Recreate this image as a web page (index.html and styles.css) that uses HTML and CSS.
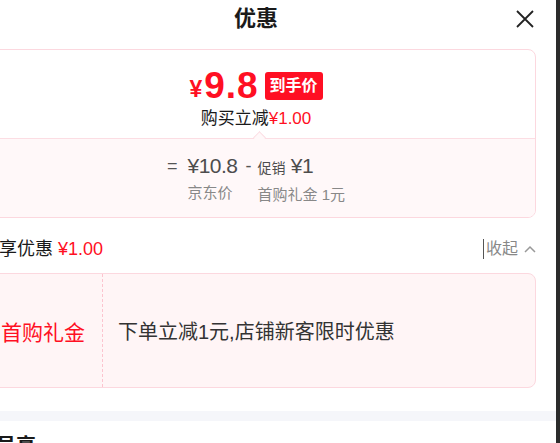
FILE: index.html
```html
<!DOCTYPE html>
<html lang="zh-CN">
<head>
    <meta charset="UTF-8">
    <title>优惠</title>
    <meta name="viewport" content="width=device-width, initial-scale=1.0">
    <link rel="stylesheet" href="styles.css">
</head>
<body>
    <div class="panel">
        <div class="header">
            <span></span>
            <h1>优惠</h1>
            <span class="close">
                <svg width="18" height="18" viewBox="0 0 18 18"><path d="M1 1L17 17M17 1L1 17" stroke="#222" stroke-width="1.8" fill="none"/></svg>
            </span>
        </div>
        <div class="content">
            <div class="price-card">
                <div class="price-top">
                    <div class="price-row">
                        <span class="yen">¥</span><span class="num">9.8</span>
                        <span class="badge">到手价</span>
                    </div>
                    <p class="minus">购买立减<em>¥1.00</em></p>
                </div>
                <div class="price-detail">
                    <span class="op eq">=</span>
                    <div class="col">
                        <span class="val">¥10.8</span>
                        <span class="lbl">京东价</span>
                    </div>
                    <span class="op dash">-</span>
                    <div class="col">
                        <span class="val"><small>促销</small> ¥1</span>
                        <span class="lbl">首购礼金 1元</span>
                    </div>
                </div>
            </div>

            <div class="sum-row">
                <span class="sum">已享优惠 <em>¥1.00</em></span>
                <span class="collapse">收起
                    <svg width="12" height="8" viewBox="0 0 12 8"><path d="M1 7L6 2L11 7" stroke="#999" stroke-width="1.5" fill="none"/></svg>
                </span>
            </div>

            <div class="gift-card">
                <div class="gift-name">首购礼金</div>
                <div class="gift-desc">下单立减1元,店铺新客限时优惠</div>
            </div>
        </div>
        <div class="band"></div>
        <div class="content">
            <h2>会员享</h2>
        </div>
    </div>
    <div class="scrollbar"></div>
</body>
</html>
```

FILE: styles.css
```css
body {
    display: flex;
    height: 443px;
    margin: 0;
    overflow: hidden;
    font-family: "Liberation Sans", "Noto Sans CJK SC", sans-serif;
    background: #fff;
    color: #1a1a1a;
}
em {
    font-style: normal;
    color: #ff0f23;
}
.panel {
    flex: none;
    width: 600px;
    margin-left: -44px;
    background: #fff;
}
.scrollbar {
    flex: none;
    width: 4px;
    background: #2b2b2b;
}
.header {
    display: grid;
    grid-template-columns: 1fr auto 1fr;
    align-items: center;
    height: 38px;
}
.header h1 {
    margin: 0;
    font-size: 22px;
    font-weight: bold;
    line-height: 38px;
    color: #1a1a1a;
}
.close {
    justify-self: end;
    display: flex;
    margin-right: 22px;
}
.content {
    padding: 0 20px;
}
.price-card {
    margin-top: 11px;
    border: 1px solid #fcd8df;
    border-radius: 8px;
    overflow: hidden;
}
.price-top {
    display: flex;
    flex-direction: column;
    align-items: center;
    padding: 18px 0 8px;
    gap: 4px;
}
.price-row {
    display: flex;
    align-items: center;
    height: 36px;
    color: #ff0f23;
    font-weight: bold;
}
.price-row .yen {
    font-size: 23px;
    line-height: 36px;
    margin-top: 6px;
}
.price-row .num {
    font-size: 37px;
    line-height: 36px;
    letter-spacing: 1px;
    margin-left: 2px;
}
.badge {
    margin-left: 6px;
    padding: 0 5px;
    height: 28px;
    line-height: 28px;
    border-radius: 3px;
    background: #ff0f23;
    color: #fff;
    font-size: 16px;
}
.minus {
    margin: 0;
    font-size: 17px;
    line-height: 22px;
}
.price-detail {
    position: relative;
    display: flex;
    justify-content: center;
    height: 64px;
    padding-top: 14px;
    border-top: 1px solid #fcdde3;
    background: #fff8f9;
}
.price-detail::before {
    content: '';
    position: absolute;
    top: -6px;
    left: calc(50% - 1px);
    width: 8px;
    height: 8px;
    border-top: 1px solid #fcdde3;
    border-left: 1px solid #fcdde3;
    background: #fff8f9;
    transform: rotate(45deg);
}
.price-detail .op {
    font-size: 18px;
    line-height: 26px;
    color: #555;
}
.price-detail .eq {
    margin-right: 10px;
}
.price-detail .dash {
    margin: 0 6px 0 8px;
}
.col {
    display: flex;
    flex-direction: column;
    gap: 4px;
}
.col .val {
    font-size: 21px;
    line-height: 26px;
    letter-spacing: -0.5px;
    color: #4d4d4d;
}
.col .val small {
    font-size: 14px;
    letter-spacing: 0;
}
.col .lbl {
    font-size: 15px;
    line-height: 20px;
    color: #888;
}
.sum-row {
    display: flex;
    justify-content: space-between;
    align-items: center;
    height: 24px;
    padding: 19px 0 12px;
}
.sum {
    padding-left: 5px;
    font-size: 18px;
    line-height: 24px;
}
.collapse {
    display: flex;
    align-items: center;
    gap: 6px;
    padding-left: 2px;
    border-left: 1px solid #555;
    font-size: 16px;
    line-height: 20px;
    color: #888;
}
.gift-card {
    display: flex;
    height: 113px;
    border: 1px solid #fcd8df;
    border-radius: 8px;
    background: #fff5f6;
}
.gift-name {
    display: flex;
    align-items: center;
    justify-content: flex-end;
    width: 108px;
    padding-right: 17px;
    border-right: 1px dashed #fcc4cf;
    font-size: 21px;
    color: #ff0f23;
}
.gift-desc {
    display: flex;
    align-items: center;
    padding-left: 15px;
    font-size: 20px;
    color: #333;
}
.band {
    height: 10px;
    margin-top: 23px;
    background: #f5f6fa;
}
h2 {
    margin: 0;
    padding-top: 11px;
    font-size: 20px;
    line-height: 28px;
    font-weight: bold;
}
```
